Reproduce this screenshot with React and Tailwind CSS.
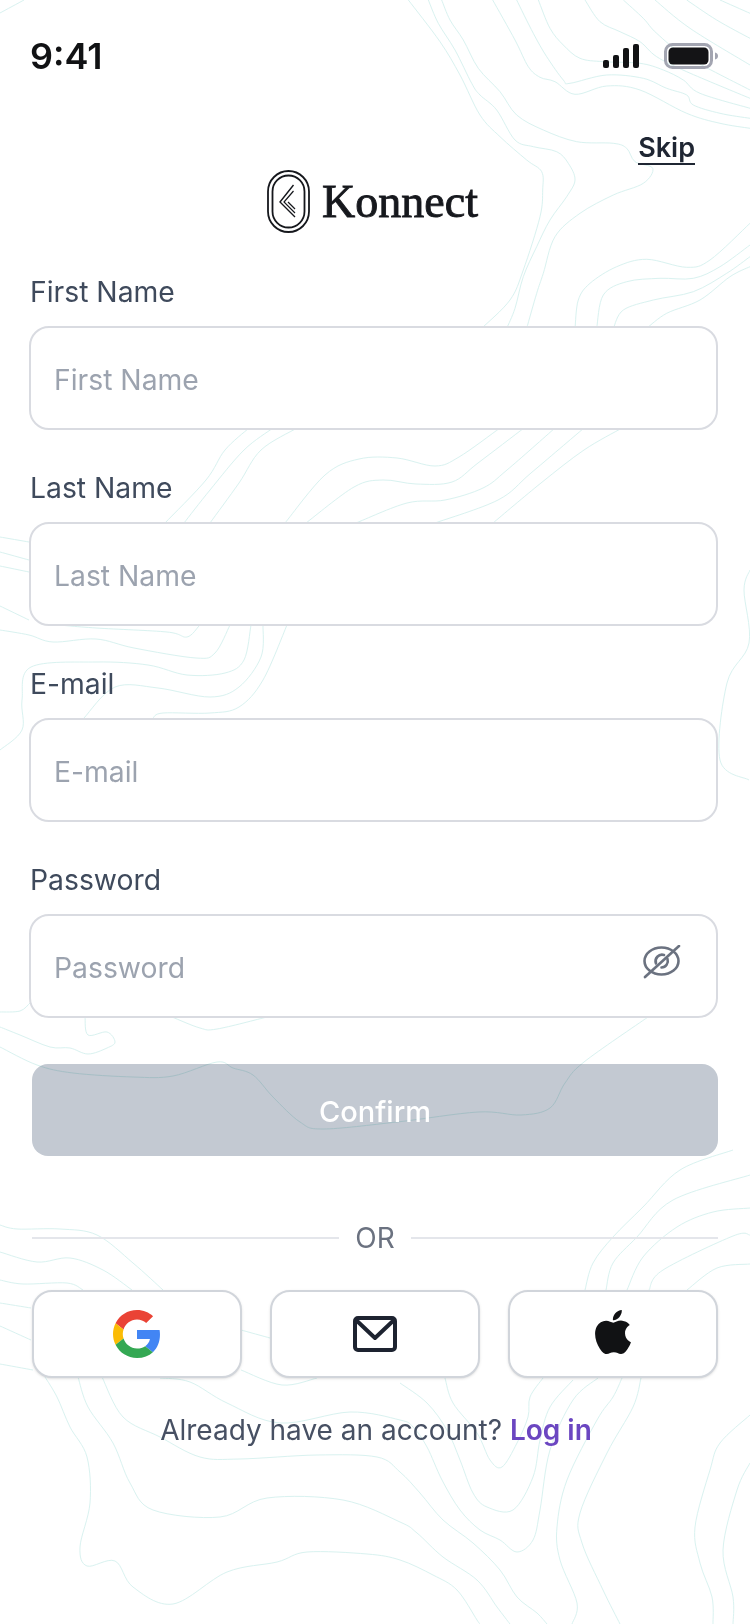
import React from "react"
import {SiApple} from "react-icons/si"

// contour lines of the backdrop, in page pixels
const shift = (pts) => pts.map(([x, y]) => [400 + x / 3, y / 3])

const CONTOURS = [
    [[0, 13], [24, 0]],
    ...[
        [[25, 0], [120, 125], [180, 225], [240, 345], [300, 410], [380, 480], [425, 515], [428, 570], [420, 650], [370, 810], [330, 900], [245, 985]],
        [[85, 0], [115, 70], [165, 150], [215, 250], [240, 285], [290, 330], [345, 420], [400, 440], [470, 455], [505, 490], [525, 540], [500, 590], [450, 660], [410, 740], [370, 830], [345, 925], [320, 985]],
        [[125, 0], [150, 60], [190, 120], [235, 205], [300, 275], [350, 345], [430, 390], [530, 425], [640, 430], [680, 445], [705, 485], [758, 505], [730, 550], [640, 585], [540, 640], [465, 710], [430, 820], [410, 880], [380, 985]],
        [[278, 0], [345, 120], [385, 200], [420, 232], [465, 245], [525, 283], [620, 258], [720, 270], [860, 340], [960, 370], [1050, 385]],
        [[350, 0], [400, 100], [440, 170], [490, 240], [510, 250], [620, 225], [730, 235], [800, 265], [860, 285], [880, 315], [960, 340], [1050, 355]],
        [[415, 0], [450, 85], [490, 135], [540, 175], [610, 185], [720, 190], [790, 210], [850, 240], [900, 280], [1050, 325]],
        [[555, 0], [600, 65], [660, 95], [720, 125], [770, 170], [860, 215], [1050, 295]],
        [[670, 0], [730, 55], [770, 100], [860, 170], [1050, 270]],
        [[765, 0], [870, 85], [1050, 195]],
        [[860, 0], [950, 60], [1050, 115]],
        [[960, 0], [1050, 40]],
        [[525, 985], [535, 900], [570, 850], [650, 800], [740, 778], [860, 802], [930, 780], [1050, 670]],
        [[590, 985], [610, 885], [680, 845], [780, 835], [880, 835], [960, 800], [1050, 735]],
        [[640, 985], [670, 930], [760, 900], [880, 875], [980, 820], [1050, 770]],
        [[740, 985], [800, 940], [900, 900], [990, 830], [1050, 800]],
    ].map(shift),
    [[249, 428], [225, 450], [206, 480], [165, 523]],
    [[273, 428], [244, 450], [210, 490], [184, 523]],
    [[297, 428], [261, 450], [239, 483], [210, 523]],
    [[500, 428], [459, 457], [435, 466], [397, 458], [359, 459], [325, 475], [285, 523]],
    [[524, 428], [478, 463], [452, 482], [416, 484], [383, 480], [354, 487], [306, 523]],
    [[555, 428], [507, 470], [483, 488], [445, 500], [407, 503], [356, 523]],
    [[584, 428], [531, 473], [498, 500], [435, 523]],
    [[622, 428], [584, 450], [541, 483], [493, 523]],
    [[0, 537], [29, 542]],
    [[0, 552], [29, 560]],
    [[0, 566], [29, 572]],
    [[0, 606], [29, 620]],
    [[48, 624], [96, 628], [167, 632], [187, 637], [199, 626]],
    [[0, 630], [29, 635], [53, 642], [96, 639], [134, 648], [196, 658], [215, 653], [230, 625]],
    [[0, 750], [22, 730], [22, 700], [31, 667], [96, 662], [148, 665], [187, 675], [225, 673], [244, 660], [251, 625]],
    [[84, 718], [115, 687], [158, 688], [210, 697], [239, 687], [261, 657], [263, 625]],
    [[153, 718], [163, 713], [210, 713], [239, 707], [263, 680], [287, 625]],
    [[750, 570], [744, 590], [749, 643], [727, 683], [720, 760], [749, 780]],
    [[0, 1012], [20, 1011], [30, 1003]],
    [[85, 1017], [88, 1035], [107, 1032], [115, 1042], [107, 1048], [88, 1054], [70, 1048], [50, 1047], [20, 1035], [0, 1027]],
    [[172, 1017], [200, 1028], [217, 1029], [267, 1017]],
    [[0, 1047], [37, 1065], [73, 1073], [133, 1077], [173, 1076], [217, 1062], [233, 1068], [253, 1075], [273, 1097], [300, 1122], [323, 1129], [397, 1122], [478, 1112], [521, 1115], [550, 1108], [565, 1083], [584, 1062], [648, 1017]],
    [[0, 1225], [17, 1229], [60, 1229], [97, 1235], [133, 1263], [163, 1290]],
    [[0, 1252], [37, 1262], [70, 1258], [103, 1270], [132, 1290]],
    [[0, 1280], [23, 1284], [67, 1283], [83, 1290]],
    [[0, 1303], [31, 1308]],
    [[0, 1326], [31, 1340]],
    [[0, 1364], [33, 1370]],
    [[241, 1330], [270, 1338]],
    [[241, 1370], [282, 1385], [317, 1378]],
    [[45, 1377], [57, 1397], [70, 1427], [87, 1457], [90, 1503], [80, 1547], [87, 1566], [115, 1561], [133, 1587], [173, 1604], [227, 1572], [277, 1562], [307, 1552], [367, 1554], [400, 1560], [433, 1575], [457, 1590], [477, 1620], [480, 1624]],
    [[78, 1377], [88, 1407], [113, 1443], [130, 1483], [153, 1510], [220, 1517], [267, 1498], [343, 1500], [400, 1522], [417, 1533], [443, 1557], [477, 1580], [497, 1607], [510, 1624]],
    [[102, 1377], [123, 1417], [160, 1437], [200, 1457], [240, 1459], [317, 1455], [377, 1457], [400, 1472], [420, 1493], [443, 1520], [473, 1543], [500, 1570], [517, 1597], [537, 1613], [547, 1624]],
    [[160, 1378], [190, 1382], [227, 1403], [280, 1423], [350, 1412], [400, 1420], [413, 1427], [427, 1447], [442, 1480], [460, 1510], [480, 1530], [500, 1540], [517, 1552], [533, 1540], [540, 1510], [550, 1450], [573, 1400], [598, 1378]],
    [[400, 1383], [427, 1403], [447, 1430], [460, 1460], [473, 1493], [487, 1507], [513, 1510], [533, 1477], [540, 1440], [550, 1407], [573, 1380]],
    [[445, 1378], [453, 1403], [477, 1433], [490, 1460], [502, 1467], [517, 1443], [528, 1417], [530, 1397], [543, 1378]],
    [[622, 1378], [613, 1397], [597, 1420], [567, 1480], [557, 1527], [560, 1560], [577, 1603], [572, 1624]],
    [[641, 1378], [633, 1407], [607, 1453], [580, 1513], [582, 1543], [603, 1590], [620, 1624]],
    [[750, 1415], [720, 1443], [710, 1470], [695, 1527], [700, 1563], [712, 1597], [713, 1624]],
    [[750, 1463], [737, 1490], [723, 1550], [733, 1597], [733, 1624]],
    [[585, 1290], [593, 1263], [613, 1237], [643, 1207], [680, 1170], [733, 1150]],
    [[606, 1290], [613, 1263], [637, 1237], [673, 1200], [750, 1175]],
    [[627, 1290], [643, 1257], [677, 1227], [713, 1212], [750, 1208]],
    [[649, 1290], [663, 1270], [733, 1236], [750, 1235]],
    [[687, 1290], [717, 1268], [750, 1264]],
]

// catmull-rom through the traced points
const smoothPath = (pts) => {
    let d = `M${pts[0][0]} ${pts[0][1]}`
    for (let i = 0; i < pts.length - 1; i++) {
        const p0 = pts[i - 1] || pts[i]
        const p1 = pts[i]
        const p2 = pts[i + 1]
        const p3 = pts[i + 2] || p2
        const c1 = [p1[0] + (p2[0] - p0[0]) / 6, p1[1] + (p2[1] - p0[1]) / 6]
        const c2 = [p2[0] - (p3[0] - p1[0]) / 6, p2[1] - (p3[1] - p1[1]) / 6]
        d += `C${c1[0].toFixed(1)} ${c1[1].toFixed(1)} ${c2[0].toFixed(1)} ${c2[1].toFixed(1)} ${p2[0].toFixed(1)} ${p2[1].toFixed(1)}`
    }
    return d
}

const Contours = () => (
    <svg className="absolute inset-0" width="750" height="1624" viewBox="0 0 750 1624" fill="none">
        {CONTOURS.map((pts, i) => (
            <path key={i} d={smoothPath(pts)} stroke="#d9f2f0" strokeWidth="1"/>
        ))}
    </svg>
)

const Signal = () => (
    <svg width="36" height="24" viewBox="0 0 36 24" fill="#111214">
        <rect x="0" y="16" width="6" height="8" rx="2"/>
        <rect x="10" y="11" width="6" height="13" rx="2"/>
        <rect x="20" y="4" width="6" height="20" rx="2"/>
        <rect x="30" y="0" width="6" height="24" rx="2"/>
    </svg>
)

const Battery = () => (
    <svg width="54" height="26" viewBox="0 0 54 26" fill="none">
        <rect x="1.5" y="1.5" width="46" height="23" rx="7" stroke="#a3a5b1" strokeWidth="3"/>
        <rect x="4.5" y="4.5" width="40" height="17" rx="4.5" fill="#141416"/>
        <path d="M51 9.5c2 .6 3 1.8 3 3.5s-1 2.9-3 3.5z" fill="#a3a5b1"/>
    </svg>
)

const LogoMark = () => (
    <svg width="43" height="63" viewBox="0 0 43 63" fill="none" stroke="#16181d">
        <rect x="1" y="1" width="41" height="61" rx="20.5" strokeWidth="1.8"/>
        <rect x="5.5" y="5.5" width="32" height="52" rx="16" strokeWidth="1.8"/>
        <path d="M26.5 15L13 32l15 15" strokeWidth="1.4"/>
        <path d="M26.5 21L17 32l11 11" strokeWidth="1.2"/>
        <path d="M21 32l7 7" strokeWidth="1.2"/>
    </svg>
)

const EyeOff = () => (
    <svg width="38" height="34" viewBox="0 0 38 34" fill="none" stroke="#6b7280" strokeWidth="2.6" strokeLinecap="round">
        <ellipse cx="18.5" cy="16" rx="17" ry="13.5"/>
        <path d="M13 18.5a6.5 6.5 0 0 1 8-8.5"/>
        <path d="M24.5 14a6.5 6.5 0 0 1-6 8.5"/>
        <path d="M2 32L36 1"/>
    </svg>
)

const GoogleIcon = () => (
    <svg width="48" height="48" viewBox="0 0 48 48">
        <path fill="#EA4335" d="M24 9.5c3.54 0 6.71 1.22 9.21 3.6l6.85-6.85C35.9 2.38 30.47 0 24 0 14.62 0 6.51 5.38 2.56 13.22l7.98 6.19C12.43 13.72 17.74 9.5 24 9.5z"/>
        <path fill="#4285F4" d="M46.98 24.55c0-1.57-.15-3.09-.38-4.55H24v9.02h12.94c-.58 2.96-2.26 5.48-4.78 7.18l7.73 6c4.51-4.18 7.09-10.36 7.09-17.65z"/>
        <path fill="#FBBC05" d="M10.53 28.59c-.48-1.45-.76-2.99-.76-4.59s.27-3.14.76-4.59l-7.98-6.19C.92 16.46 0 20.12 0 24c0 3.88.92 7.54 2.56 10.78l7.97-6.19z"/>
        <path fill="#34A853" d="M24 48c6.48 0 11.93-2.13 15.89-5.81l-7.73-6c-2.15 1.45-4.92 2.3-8.16 2.3-6.26 0-11.57-4.22-13.47-9.91l-7.98 6.19C6.51 42.62 14.62 48 24 48z"/>
    </svg>
)

const MailIcon = () => (
    <svg width="44" height="36" viewBox="0 0 44 36" fill="none" stroke="#1d2330" strokeWidth="4" strokeLinejoin="round">
        <rect x="2" y="2" width="40" height="32" rx="3"/>
        <path d="M3 4l19 18L41 4"/>
    </svg>
)

const Field = ({label, children}) => (
    <div className="flex flex-col gap-[16px]">
        <label className="pl-[1px] text-[28.3px] leading-[36px] text-[#3f4a5c]">{label}</label>
        <div className="relative">
            <input
                readOnly
                placeholder={label}
                className="w-full h-[104px] pl-[23px] pr-[23px] pt-[3px] bg-white border-2 border-[#d9dbe1] rounded-[20px] text-[28.3px] outline-none placeholder:text-[#9ca3af]"
            />
            {children}
        </div>
    </div>
)

const SocialButton = ({children}) => (
    <button className="flex-1 h-[88px] flex items-center justify-center bg-white border-2 border-[#d1d5db] rounded-[20px] shadow-sm">
        {children}
    </button>
)

export default function App() {
    return (
        <div className="relative w-[750px] h-[1624px] overflow-hidden bg-white font-[Inter,sans-serif]">
            <Contours/>
            <div className="relative flex flex-col">
                <div className="flex items-center justify-between pt-[39px] pl-[30px] pr-[32px]">
                    <span className="text-[36px] leading-[34px] font-semibold text-[#111214]">9:41</span>
                    <div className="flex items-center gap-[25px]">
                        <Signal/>
                        <Battery/>
                    </div>
                </div>

                <div className="flex flex-col pl-[29px] pr-[32px]">
                    <div className="flex justify-end pr-[23px] mt-[58px]">
                        <span className="pt-[2px] text-[27px] leading-[30px] font-semibold text-[#1f2633] border-b-2 border-[#1f2633]">Skip</span>
                    </div>
                    <div className="flex items-center justify-center gap-[12px] pr-[2px] mt-[5px]">
                        <LogoMark/>
                        <span className="font-['Liberation_Serif',serif] font-normal text-[46px] leading-[63px] text-[#16181d] [-webkit-text-stroke:0.9px_#16181d]">Konnect</span>
                    </div>

                    <div className="flex flex-col gap-[40px] mt-[41px]">
                        <Field label="First Name"/>
                        <Field label="Last Name"/>
                        <Field label="E-mail"/>
                        <Field label="Password">
                            <div className="absolute right-[37px] top-[31px]">
                                <EyeOff/>
                            </div>
                        </Field>
                    </div>

                    <div className="flex flex-col pl-[3px]">
                        <button className="relative h-[92px] mt-[46px] pt-[3px] text-white text-[29px] font-medium">
                            <span className="absolute inset-0 rounded-[16px] bg-[#c3c9d2] mix-blend-multiply"/>
                            <span className="relative">Confirm</span>
                        </button>

                        <div className="flex items-center gap-[16px] mt-[64px] h-[36px]">
                            <div className="flex-1 h-[2px] bg-[#e4e6eb]"/>
                            <span className="text-[28px] leading-[36px] text-[#6b7280]">OR</span>
                            <div className="flex-1 h-[2px] bg-[#e4e6eb]"/>
                        </div>

                        <div className="flex gap-[28px] mt-[34px]">
                            <SocialButton><GoogleIcon/></SocialButton>
                            <SocialButton><MailIcon/></SocialButton>
                            <SocialButton><span className="-mt-[4px]"><SiApple size={44} color="#111214"/></span></SocialButton>
                        </div>

                        <p className="mt-[34px] pl-[2px] text-center text-[28px] leading-[36px] text-[#475063]">
                            Already have an account? <span className="font-semibold text-[#6b46c1]">Log in</span>
                        </p>
                    </div>
                </div>
            </div>
        </div>
    )
}
